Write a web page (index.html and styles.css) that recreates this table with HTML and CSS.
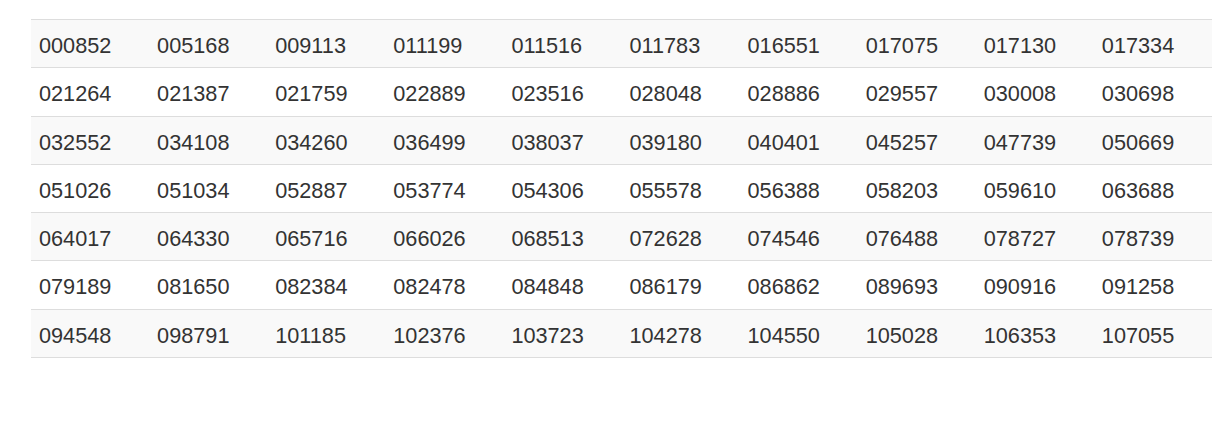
FILE: index.html
```html
<!DOCTYPE html>
<html>
<head>
<meta charset="utf-8">
<link rel="stylesheet" href="styles.css">
</head>
<body>
<div class="wrap">
<table class="grid">
<tbody>
<tr><td>000852</td><td>005168</td><td>009113</td><td>011199</td><td>011516</td><td>011783</td><td>016551</td><td>017075</td><td>017130</td><td>017334</td></tr>
<tr><td>021264</td><td>021387</td><td>021759</td><td>022889</td><td>023516</td><td>028048</td><td>028886</td><td>029557</td><td>030008</td><td>030698</td></tr>
<tr><td>032552</td><td>034108</td><td>034260</td><td>036499</td><td>038037</td><td>039180</td><td>040401</td><td>045257</td><td>047739</td><td>050669</td></tr>
<tr><td>051026</td><td>051034</td><td>052887</td><td>053774</td><td>054306</td><td>055578</td><td>056388</td><td>058203</td><td>059610</td><td>063688</td></tr>
<tr><td>064017</td><td>064330</td><td>065716</td><td>066026</td><td>068513</td><td>072628</td><td>074546</td><td>076488</td><td>078727</td><td>078739</td></tr>
<tr><td>079189</td><td>081650</td><td>082384</td><td>082478</td><td>084848</td><td>086179</td><td>086862</td><td>089693</td><td>090916</td><td>091258</td></tr>
<tr><td>094548</td><td>098791</td><td>101185</td><td>102376</td><td>103723</td><td>104278</td><td>104550</td><td>105028</td><td>106353</td><td>107055</td></tr>
</tbody>
</table>
</div>
</body>
</html>
```
FILE: styles.css
```css
html, body {
  margin: 0;
  padding: 0;
  background: #fff;
}
.wrap {
  padding: 19px 11px 0 31px;
}
.grid {
  width: 1181px;
  border-collapse: collapse;
  table-layout: fixed;
  font-family: "Liberation Sans", Arial, sans-serif;
  font-size: 21.7px;
  line-height: 31px;
  color: #333;
  border-bottom: 1px solid #ddd;
}
.grid td {
  padding: 10px 8px 6.3px;
  border-top: 1px solid #ddd;
  vertical-align: top;
}
.grid tr:nth-child(odd) td {
  background: #f9f9f9;
}
```
